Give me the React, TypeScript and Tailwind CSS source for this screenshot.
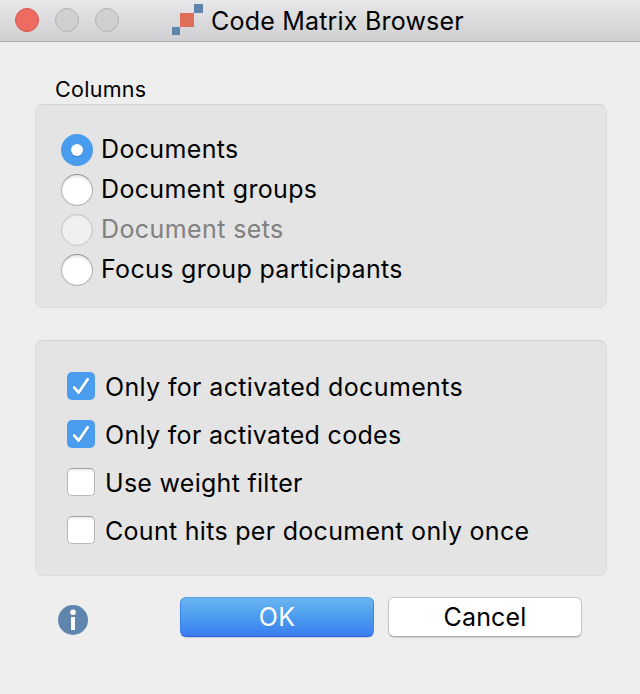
import React from "react";

type Option = { label: string; tracking: string; on?: boolean; disabled?: boolean };

const columns: Option[] = [
  { label: "Documents", tracking: "tracking-[0.35px]", on: true },
  { label: "Document groups", tracking: "tracking-[0.35px]" },
  { label: "Document sets", tracking: "tracking-[0.4px]", disabled: true },
  { label: "Focus group participants", tracking: "tracking-[0.33px]" },
];

const filters: Option[] = [
  { label: "Only for activated documents", tracking: "tracking-[0.35px]", on: true },
  { label: "Only for activated codes", tracking: "tracking-[0.32px]", on: true },
  { label: "Use weight filter", tracking: "tracking-[0.28px]" },
  { label: "Count hits per document only once", tracking: "tracking-[0.29px]" },
];

function Radio({ on, disabled }: { on?: boolean; disabled?: boolean }) {
  if (on) {
    return (
      <span className="flex size-8 shrink-0 items-center justify-center rounded-full bg-[#499cee]">
        <span className="size-3 rounded-full bg-white shadow-[0_1px_1px_rgba(0,50,120,0.3)]" />
      </span>
    );
  }
  return (
    <span
      className={
        disabled
          ? "size-8 shrink-0 rounded-full border border-[#c4c4c4] bg-[#f0f0f0] shadow-[inset_0_1px_2px_rgba(0,0,0,0.06)]"
          : "size-8 shrink-0 rounded-full border border-[#b0b0b0] border-t-[#8e8e8e] bg-white shadow-[inset_0_2px_2px_rgba(0,0,0,0.1)]"
      }
    />
  );
}

function Check({ on }: { on?: boolean }) {
  if (on) {
    return (
      <span className="size-7 shrink-0 rounded-[5px] bg-[#499cee]">
        <svg viewBox="0 0 28 28" className="size-7" fill="none" strokeLinecap="round" strokeLinejoin="round" strokeWidth="2.8">
          <path d="M7.2 16.4 11.6 21.6 20.7 8.2" stroke="#3079c8" strokeOpacity=".5" />
          <path d="M7.2 15.6 11.6 20.7 20.7 7.3" stroke="#fff" />
        </svg>
      </span>
    );
  }
  return (
    <span className="size-7 shrink-0 rounded-[5px] border border-[#b8b8b8] border-t-[#a0a0a0] bg-white shadow-[inset_0_2px_2px_rgba(0,0,0,0.07)]" />
  );
}

export default function App() {
  return (
    <div className="flex h-[694px] w-[640px] flex-col bg-[#eeeeee] font-['Inter','Liberation_Sans',sans-serif] text-[25px] text-black">
      <header className="flex h-[42px] shrink-0 rounded-t-[5px] border-b border-[#acacae] bg-linear-to-b from-[#e8e7e9] to-[#cfced0]">
        <div className="flex gap-4 pt-2 pl-[15px]">
          <span className="size-6 rounded-full border border-[#d8544b] bg-[#ed6b60]" />
          <span className="size-6 rounded-full border border-[#b3b3b4] bg-[#d1d0d1]" />
          <span className="size-6 rounded-full border border-[#b3b3b4] bg-[#d1d0d1]" />
        </div>
        <svg viewBox="0 0 31 31" className="mt-1 ml-[53px] h-[31px] w-[31px] shrink-0" shapeRendering="crispEdges">
          <path d="M22 0h9v9h-9zM0 23h8v8H0z" fill="#5e86ad" />
          <path d="M8 9h14v14H8z" fill="#de6e5a" />
        </svg>
        <h1 className="mt-1 ml-2 leading-[34px] tracking-[0.2px] whitespace-nowrap">Code Matrix Browser</h1>
      </header>
      <main className="flex flex-1 flex-col px-[35px] pr-[33px]">
        <h2 className="mt-[33px] mb-px h-7 pl-5 text-[21.5px] leading-7 tracking-[0.3px]">Columns</h2>
        <section className="flex h-[204px] shrink-0 flex-col gap-2 rounded-lg border border-[#dcdcdc] border-t-[#d3d3d3] bg-[#e4e4e4] pt-[29px] pl-[25px]">
          {columns.map((o) => (
            <label key={o.label} className="flex h-8 items-center gap-2">
              <Radio on={o.on} disabled={o.disabled} />
              <span className={`pb-0.5 leading-8 whitespace-nowrap ${o.tracking} ${o.disabled ? "text-[#808080]" : ""}`}>{o.label}</span>
            </label>
          ))}
        </section>
        <section className="mt-8 flex h-[236px] shrink-0 flex-col gap-5 rounded-lg border border-[#dcdcdc] border-t-[#d3d3d3] bg-[#e4e4e4] pt-[31px] pl-[31px]">
          {filters.map((o) => (
            <label key={o.label} className="flex h-7 items-center gap-[10px]">
              <Check on={o.on} />
              <span className={`pt-px leading-8 whitespace-nowrap ${o.tracking}`}>{o.label}</span>
            </label>
          ))}
        </section>
        <footer className="mt-[21px] flex items-start pl-[23px]">
          <svg viewBox="0 0 30 30" className="mt-2 size-[30px] shrink-0">
            <circle cx="15" cy="15" r="15" fill="#5e86ad" />
            <circle cx="15" cy="7.2" r="2.8" fill="#fff" />
            <path d="M13 12h4v13h-4z" fill="#fff" />
          </svg>
          <button className="ml-[92px] h-10 w-[194px] rounded-[6px] border border-[#3f83ee] border-t-[#55a1e2] border-b-[#2a63e8] bg-linear-to-b from-[#6ab4f0] via-[#4b9cef] to-[#3b7def] leading-[38px] text-white shadow-[0_1px_1px_rgba(0,0,0,0.12)]">
            <span className="tracking-[0.3px]">OK</span>
          </button>
          <button className="ml-[14px] h-10 w-[194px] rounded-[6px] border border-[#c6c6c6] border-b-[#acacac] bg-white leading-[38px] shadow-[0_1px_1px_rgba(0,0,0,0.12)]">
            <span className="tracking-[0.15px]">Cancel</span>
          </button>
        </footer>
      </main>
    </div>
  );
}
